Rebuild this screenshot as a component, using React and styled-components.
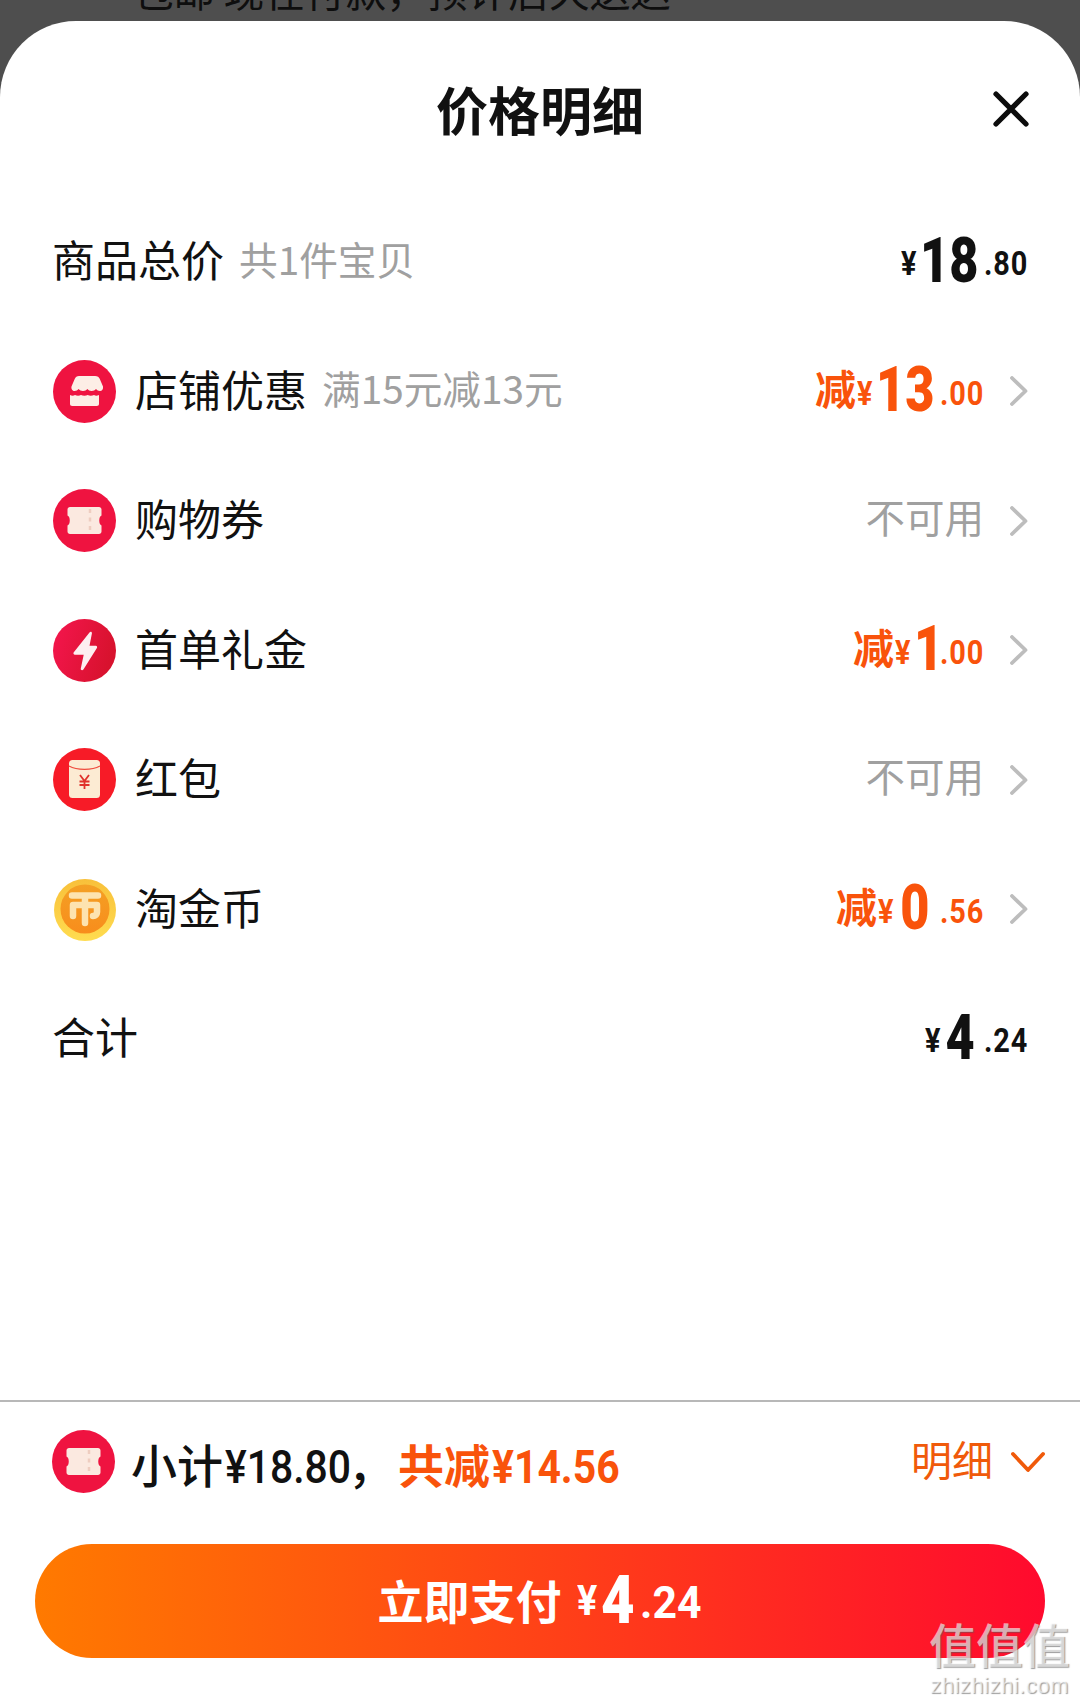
import React from 'react'
import styled, { createGlobalStyle } from 'styled-components'

const CJK = `'Noto Sans CJK SC', 'Liberation Sans', sans-serif`
const NUM = `'Roboto', 'Noto Sans CJK SC', sans-serif`

const rows = [
  { icon: 'shop', label: '店铺优惠', note: '满15元减13元', cut: ['13', '00'] },
  { icon: 'ticket', label: '购物券', off: true },
  { icon: 'bolt', label: '首单礼金', cut: ['1', '00'] },
  { icon: 'packet', label: '红包', off: true },
  { icon: 'coin', label: '淘金币', cut: ['0', '56'] }
]

// the price digits are proportional: width and left pad of the big number, in px
const wholeBoxes = {
  1: { width: 20, pad: 0 },
  0: { width: 37, pad: 4 },
  4: { width: 34, pad: 2 }
}

const RowIcon = ({ kind }) => {
  if (kind === 'shop')
    return (
      <svg viewBox='0 0 63 63' width='63' height='63'>
        <circle cx='31.5' cy='31.5' r='31.5' fill='#ef1340' />
        <path d='M21 16h21c2.500 0 4 1 4.800 3l3.200 7.500c.5 2.500-1 4.500-3 4.500-1.700 0-3-.8-4-2-1 1.200-2.500 2-4.400 2s-3.200-.8-4.200-2c-1 1.200-2.500 2-4.400 2s-3.400-.8-4.400-2c-1 1.200-2.300 2-4 2-2 0-3.700-2-3.100-4.500l3.200-7.500c.8-2 2.200-3 4.300-3z' fill='#fdeee6' />
        <path d='M17 35c1.500.9 3.600 1 5 0 1.700 1.100 4.400 1.100 6 0 1.700 1.100 5 1.100 6.700 0 1.700 1.100 4.400 1.100 6.300 0 1.400 1 3.400.9 5-.1v8.800c0 1.300-.8 2.300-2.300 2.300H19.300c-1.500 0-2.300-1-2.300-2.300z' fill='#fdeee6' />
      </svg>
    )
  if (kind === 'ticket') return <TicketIcon />
  if (kind === 'bolt')
    return (
      <svg viewBox='0 0 63 63' width='63' height='63'>
        <defs>
          <linearGradient id='boltFill' x1='0' y1='0' x2='1' y2='0.3'>
            <stop offset='0' stopColor='#f5164e' />
            <stop offset='1' stopColor='#d8122e' />
          </linearGradient>
        </defs>
        <circle cx='31.500' cy='31.500' r='31.500' fill='url(#boltFill)' />
        <path d='M36.500 13.500c1-1.300 2.700-.5 2.400 1l-2.400 12.300h6.300c1.200 0 1.700 1.100 1.100 2.200L30.400 50.500c-1 1.400-3 .6-2.600-1l2.900-13.800h-8.800c-1.200 0-1.800-1-1.300-2.100z' fill='#fdeef0' />
      </svg>
    )
  if (kind === 'packet')
    return (
      <svg viewBox='0 0 63 63' width='63' height='63'>
        <circle cx='31.500' cy='31.500' r='31.500' fill='#f71b27' />
        <rect x='16' y='12' width='31' height='38' rx='3.500' fill='#fcebd3' />
        <path d='M16 18c8 4.500 23 4.500 31 0' fill='none' stroke='#ef4b3d' strokeWidth='1.300' />
        <path d='M27 27l4.500 6 4.500-6M31.500 33v8M26.500 33.500h10M26.500 37h10' fill='none' stroke='#e0322b' strokeWidth='1.800' />
      </svg>
    )
  return (
    <svg viewBox='0 0 63 63' width='63' height='63'>
      <defs>
        <linearGradient id='coinRim' x1='0' y1='0' x2='0' y2='1'>
          <stop offset='0' stopColor='#f8c03a' />
          <stop offset='1' stopColor='#ffdc50' />
        </linearGradient>
        <linearGradient id='coinFace' x1='0' y1='0' x2='0' y2='1'>
          <stop offset='0' stopColor='#f4a024' />
          <stop offset='1' stopColor='#f88d1c' />
        </linearGradient>
      </defs>
      <circle cx='32' cy='32' r='31' fill='url(#coinRim)' />
      <circle cx='32' cy='31' r='24.500' fill='url(#coinFace)' />
      <path d='M19 17.500h26M32 18v7M20 27v11M20 27h24v7c0 2.500-1.500 4-4 4M32 27v18' fill='none' stroke='#fde3b0' strokeWidth='6.500' strokeLinecap='round' strokeLinejoin='round' />
    </svg>
  )
}

const TicketIcon = () => (
  <svg viewBox='0 0 63 63' width='63' height='63'>
    <circle cx='31.500' cy='31.500' r='31.500' fill='#ef1340' />
    <path d='M17 18h29c1.400 0 2.500 1 2.500 2.500v6c-3 1-3 9 0 10v6c0 1.500-1.100 2.500-2.500 2.500H17c-1.400 0-2.500-1-2.500-2.500v-6c3-1 3-9 0-10v-6c0-1.500 1.100-2.500 2.500-2.500z' fill='#fbe9e0' />
    <path d='M37 20v24' stroke='#eecdc0' strokeWidth='2.500' strokeDasharray='4 4.500' />
  </svg>
)

const Chevron = () => (
  <ChevronBox viewBox='0 0 18 30' width='18' height='30'>
    <path d='M2 2l13.500 13L2 28' fill='none' stroke='#bdbdbd' strokeWidth='3.800' strokeLinecap='round' strokeLinejoin='round' />
  </ChevronBox>
)

const Price = ({ whole, cents, tone, cut }) => {
  const box = wholeBoxes[whole] || { width: 58, pad: 0 }
  return (
    <PriceBox $tone={tone}>
      {cut && <CutLabel>减</CutLabel>}
      <Yen>¥</Yen>
      <Whole $width={box.width} $pad={box.pad}>
        {whole}
      </Whole>
      <Cents>.{cents}</Cents>
    </PriceBox>
  )
}

const App = () => (
  <Page>
    <GlobalStyle />
    <Backdrop>
      <BackdropText>包邮 现在付款，预计后天送达</BackdropText>
    </Backdrop>
    <Sheet>
      <Header>
        <Title>价格明细</Title>
        <CloseIcon viewBox='0 0 36 36' width='36' height='36'>
          <path d='M3 3l30 30M33 3L3 33' stroke='#0c0c0c' strokeWidth='5.200' strokeLinecap='round' />
        </CloseIcon>
      </Header>

      <Row>
        <RowLeft>
          <Label>商品总价</Label>
          <Note>共1件宝贝</Note>
        </RowLeft>
        <Price whole='18' cents='80' />
      </Row>

      {rows.map((row) => (
        <Row key={row.label}>
          <RowLeft>
            <IconSlot>
              <RowIcon kind={row.icon} />
            </IconSlot>
            <Label>{row.label}</Label>
            {row.note && <Note>{row.note}</Note>}
          </RowLeft>
          <RowRight>
            {row.off ? (
              <Unavailable>不可用</Unavailable>
            ) : (
              <Price whole={row.cut[0]} cents={row.cut[1]} tone='#f9530b' cut />
            )}
            <Chevron />
          </RowRight>
        </Row>
      ))}

      <Row>
        <Label>合计</Label>
        <Price whole='4' cents='24' />
      </Row>

      <Footer>
        <Summary>
          <SummaryLeft>
            <TicketIcon />
            <SummaryText>
              小计<SummaryNum>¥18.80</SummaryNum>，
              <SummaryCut>
                共减<SummaryNum>¥14.56</SummaryNum>
              </SummaryCut>
            </SummaryText>
          </SummaryLeft>
          <DetailToggle>
            <DetailLabel>明细</DetailLabel>
            <svg viewBox='0 0 34 22' width='34' height='22'>
              <path d='M2 3l15 16L32 3' fill='none' stroke='#f05a0a' strokeWidth='3.800' strokeLinecap='round' strokeLinejoin='round' />
            </svg>
          </DetailToggle>
        </Summary>
        <PayButton>
          <PayLabel>立即支付</PayLabel>
          <PayYen>¥</PayYen>
          <PayWhole>4</PayWhole>
          <PayCents>.24</PayCents>
        </PayButton>
      </Footer>
    </Sheet>
    <Watermark>
      <WatermarkMark>值值值</WatermarkMark>
      <WatermarkUrl>zhizhizhi.com</WatermarkUrl>
    </Watermark>
  </Page>
)

const GlobalStyle = createGlobalStyle`
  html, body {
    margin: 0;
    padding: 0;
    background: #4e4e4e;
  }
  * {
    box-sizing: border-box;
  }
`

const Page = styled.div`
  width: 1080px;
  height: 1704px;
  position: relative;
  overflow: hidden;
  display: flex;
  flex-direction: column;
  background: #4e4e4e;
  font-family: ${CJK};
`

const Backdrop = styled.div`
  height: 21px;
  flex: none;
  padding-left: 133px;
  overflow: hidden;
  display: flex;
  align-items: flex-end;
`

const BackdropText = styled.div`
  font-size: 40.7px;
  line-height: 60px;
  margin-bottom: 1px;
  color: #0e0e0e;
  white-space: nowrap;
`

const Sheet = styled.div`
  flex: 1;
  display: flex;
  flex-direction: column;
  background: #fff;
  border-radius: 76px 76px 0 0;
`

const Header = styled.div`
  height: 176px;
  flex: none;
  display: grid;
  grid-template-columns: 1fr auto 1fr;
  align-items: center;
  padding: 0 52px 0;
`

const Title = styled.h1`
  grid-column: 2;
  margin: 0;
  font-size: 52px;
  line-height: 60px;
  font-weight: 700;
  color: #111;
`

const CloseIcon = styled.svg`
  grid-column: 3;
  justify-self: end;
  margin: 0 -1px 0 0;
`

const Row = styled.div`
  height: 129.5px;
  flex: none;
  display: flex;
  align-items: center;
  justify-content: space-between;
  padding: 0 52px;
`

const RowLeft = styled.div`
  display: flex;
  align-items: center;
`

const RowRight = styled.div`
  display: flex;
  align-items: center;
`

const IconSlot = styled.div`
  width: 82px;
  height: 63px;
  flex: none;
  margin-left: 1px;
`

const Label = styled.span`
  font-size: 43px;
  line-height: 60px;
  margin-bottom: 7px;
  color: #111;
`

const Note = styled.span`
  font-size: 38.7px;
  line-height: 60px;
  margin: 0 0 8px 15px;
  color: #a0a0a0;
`

const Unavailable = styled.span`
  font-size: 39.5px;
  line-height: 60px;
  margin-bottom: 10px;
  color: #a0a0a0;
`

const ChevronBox = styled.svg`
  margin-left: 26px;
  flex: none;
`

const PriceBox = styled.span`
  display: inline-flex;
  align-items: center;
  height: 70px;
  color: ${(p) => p.$tone || '#111'};
  font-family: ${NUM};
  font-weight: 700;
`

const CutLabel = styled.span`
  font-family: ${CJK};
  font-size: 41px;
  line-height: 50px;
  font-weight: 700;
  margin: 0 1px 8px 0;
`

// condensed digits: the box has the narrow width, the glyphs are squeezed into it
const Yen = styled.span`
  display: inline-block;
  width: 17px;
  font-size: 34px;
  line-height: 40px;
  margin: 3px 2px 0 0;
  transform: scaleX(0.85);
  transform-origin: left;
`

const Whole = styled.span`
  display: inline-block;
  width: ${(p) => p.$width}px;
  padding-left: ${(p) => p.$pad}px;
  font-size: 63px;
  line-height: 70px;
  font-weight: 900;
  white-space: nowrap;
  margin-bottom: 2px;
  transform: scaleX(0.8);
  transform-origin: left;
`

const Cents = styled.span`
  display: inline-block;
  width: 44px;
  font-size: 34px;
  line-height: 40px;
  letter-spacing: 1px;
  margin: 3px 0 0 6px;
  transform: scaleX(0.85);
  transform-origin: left;
`

const Footer = styled.div`
  margin-top: auto;
  flex: none;
  border-top: 2px solid #b8b8b8;
  padding: 0 35px 46px;
`

const Summary = styled.div`
  height: 142px;
  padding: 0 0 23px 17px;
  display: flex;
  align-items: center;
  justify-content: space-between;
`

const SummaryLeft = styled.div`
  display: flex;
  align-items: center;
  gap: 16px;
`

const SummaryText = styled.span`
  font-size: 46px;
  font-weight: 500;
  margin-top: 3px;
  color: #111;
  white-space: nowrap;
`

const SummaryNum = styled.span`
  display: inline-block;
  width: 123px;
  margin-left: 2px;
  font-family: ${NUM};
  font-size: 47px;
  transform: scaleX(0.87);
  transform-origin: left;
`

const SummaryCut = styled.span`
  color: #f9530b;
  font-weight: 700;
  margin-left: 4px;
`

const DetailToggle = styled.div`
  display: flex;
  align-items: center;
  gap: 18px;
  font-size: 41px;
  color: #f05a0a;
`

const DetailLabel = styled.span`
  margin-bottom: 8px;
`

const PayButton = styled.div`
  height: 114px;
  border-radius: 57px;
  display: flex;
  align-items: center;
  justify-content: center;
  color: #fff;
  font-weight: 700;
  background: linear-gradient(90deg, #ff7a00, #ff0a2e);
`

const PayLabel = styled.span`
  font-size: 46px;
  line-height: 60px;
  margin: 0 15px 4px 3px;
`

const PayYen = styled.span`
  display: inline-block;
  width: 21px;
  font-family: ${NUM};
  font-size: 42px;
  line-height: 60px;
  margin-right: 3px;
  transform: scaleX(0.9);
  transform-origin: left;
`

const PayWhole = styled.span`
  display: inline-block;
  width: 34px;
  font-family: ${NUM};
  font-size: 66px;
  line-height: 70px;
  font-weight: 900;
  transform: scaleX(0.88);
  transform-origin: left;
`

const PayCents = styled.span`
  display: inline-block;
  width: 66px;
  font-family: ${NUM};
  font-size: 45px;
  line-height: 60px;
  margin: 4px 0 0 5px;
  transform: scaleX(0.95);
  transform-origin: left;
`

const Watermark = styled.div`
  position: absolute;
  right: 10px;
  bottom: 6px;
  display: flex;
  flex-direction: column;
  align-items: center;
  color: rgba(255, 255, 255, 0.62);
  text-shadow: 1px 1px 1px rgba(90, 90, 90, 0.6);
`

const WatermarkMark = styled.div`
  font-size: 47px;
  line-height: 52px;
  font-weight: 500;
  margin-bottom: 5px;
`

const WatermarkUrl = styled.div`
  font-family: 'Liberation Sans', sans-serif;
  font-size: 22px;
  line-height: 24px;
  letter-spacing: 0.5px;
`

export default App
